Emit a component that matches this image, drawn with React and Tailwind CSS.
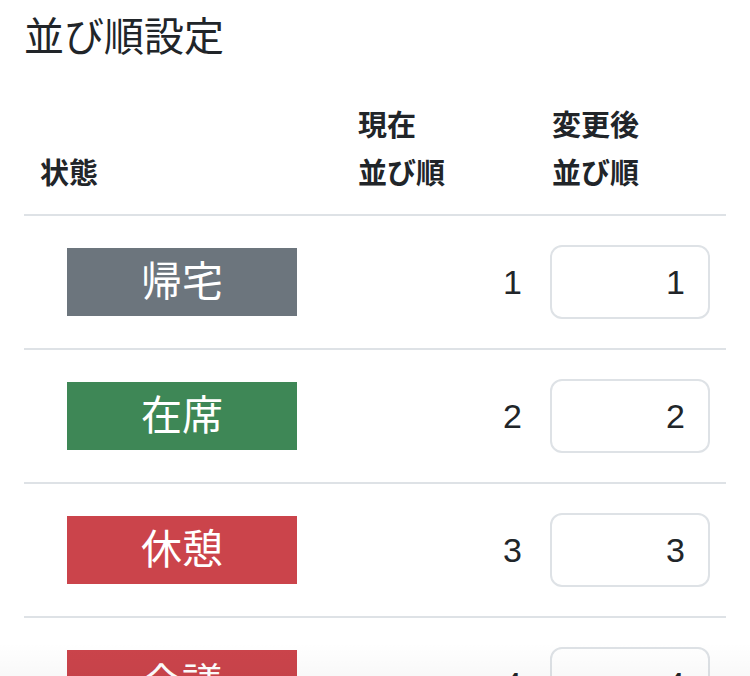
import React from "react";

const rows = [
  { label: "帰宅", color: "bg-[#6c757d]", cur: 1 },
  { label: "在席", color: "bg-[#3e8756]", cur: 2 },
  { label: "休憩", color: "bg-[#cb444b]", cur: 3 },
  { label: "会議", color: "bg-[#cb444b]", cur: 4 },
];

export default function App() {
  return (
    <div
      className="relative h-[676px] w-[750px] overflow-hidden bg-white px-6 pt-[13px] text-[#212529]"
      style={{ fontFamily: '"Liberation Sans", "Noto Sans CJK JP", sans-serif' }}
    >
      <h1 className="mb-[26px] text-[40px] leading-[48px] font-normal">並び順設定</h1>
      <table className="w-full table-fixed border-collapse">
        <colgroup>
          <col className="w-[316px]" />
          <col className="w-[196px]" />
          <col className="w-[190px]" />
        </colgroup>
        <thead>
          <tr className="border-b-2 border-[#dee2e6]">
            <th className="px-4 pt-[15px] pb-4 text-left align-bottom text-[29px] leading-[48px] font-bold">状態</th>
            <th className="px-4 pt-[15px] pb-4 pl-[18px] text-left align-bottom text-[29px] leading-[48px] font-bold">
              現在
              <br />
              並び順
            </th>
            <th className="px-4 pt-[15px] pb-4 text-left align-bottom text-[29px] leading-[48px] font-bold">
              変更後
              <br />
              並び順
            </th>
          </tr>
        </thead>
        <tbody>
          {rows.map((r) => (
            <tr key={r.label} className="h-[134px] border-b-2 border-[#dee2e6]">
              <td className="px-4 align-middle">
                <div
                  className={`mx-auto flex h-[68px] w-[230px] items-center justify-center text-[41px] leading-none text-white ${r.color}`}
                >
                  {r.label}
                </div>
              </td>
              <td className="px-4 pr-[14px] text-right align-middle text-[34px]">{r.cur}</td>
              <td className="pr-4 pl-[14px] align-middle">
                <div className="flex h-[74px] w-[160px] items-center justify-end rounded-[12px] border-2 border-[#dee2e6] pr-[23px] text-[34px]">
                  {r.cur}
                </div>
              </td>
            </tr>
          ))}
        </tbody>
      </table>
      <div className="pointer-events-none absolute right-0 bottom-0 left-0 h-[34px] bg-gradient-to-b from-transparent to-black/[0.025]" />
    </div>
  );
}
